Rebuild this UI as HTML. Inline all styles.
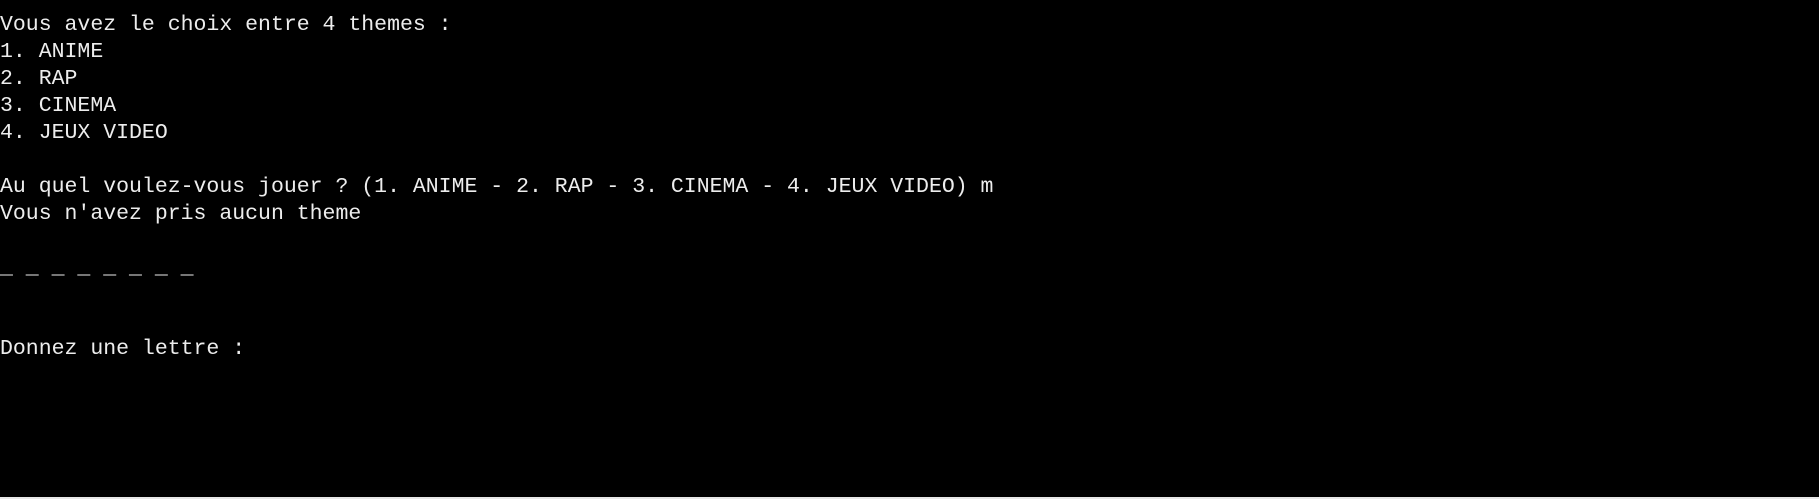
<!DOCTYPE html>
<html><head><meta charset="utf-8"><style>
html,body{margin:0;padding:0;background:#000;}
body{width:1819px;height:499px;overflow:hidden;position:relative;}
pre{margin:0;position:absolute;left:0;top:12px;font-family:"Liberation Mono",monospace;font-size:21.5px;line-height:27px;color:#ededed;}
.bar{position:absolute;left:0;bottom:0;width:1819px;height:2px;background:#e8e8e8;}
</style></head><body>
<pre>Vous avez le choix entre 4 themes :
1. ANIME
2. RAP
3. CINEMA
4. JEUX VIDEO

Au quel voulez-vous jouer ? (1. ANIME - 2. RAP - 3. CINEMA - 4. JEUX VIDEO) m
Vous n'avez pris aucun theme

_ _ _ _ _ _ _ _


Donnez une lettre :</pre>
<div class="bar"></div>
</body></html>
